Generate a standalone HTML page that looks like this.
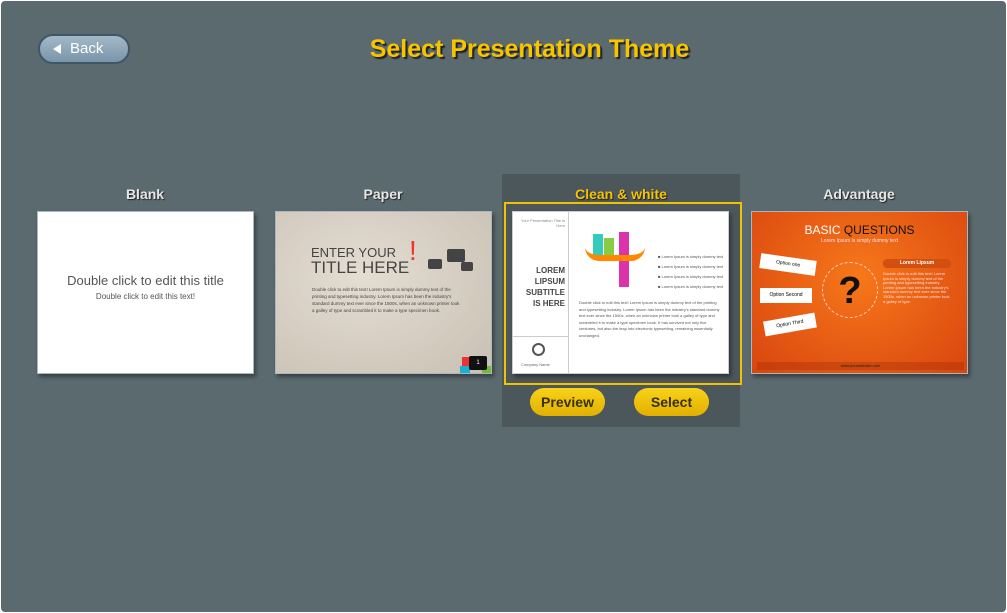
<!DOCTYPE html>
<html><head><style>
*{margin:0;padding:0;box-sizing:border-box}
body{width:1007px;height:613px;overflow:hidden;background:#fff;font-family:"Liberation Sans",sans-serif}
#app{position:absolute;left:1px;top:1px;width:1005px;height:611px;background:#5b6a6f;border-radius:4px}
.back{position:absolute;left:37px;top:33px;width:92px;height:30px;border-radius:15px;background:linear-gradient(#a3b9c8,#7a95a9);border:2px solid #3f5668;color:#fff;font-size:15px;line-height:26px;padding-left:30px}
.back:before{content:"";position:absolute;left:13px;top:8px;border-right:8px solid #fff;border-top:5px solid transparent;border-bottom:5px solid transparent}
h1{position:absolute;left:0;width:1057px;top:34px;text-align:center;font-size:25px;font-weight:bold;color:#f7c500;text-shadow:2px 2px 1px #222}
.lab{position:absolute;top:185px;width:216px;text-align:center;font-size:14px;font-weight:bold;color:#e6e6e6;text-shadow:1px 1px 1px #222}
.card{position:absolute;top:210px;width:217px;height:163px;border:1px solid #a9b7c2;box-shadow:2px 3px 4px rgba(0,0,0,.4);overflow:hidden}
.panel{position:absolute;left:501px;top:173px;width:238px;height:253px;background:#4c575b}
.sel{position:absolute;left:503px;top:201px;width:238px;height:183px;border:2px solid #f2c200}
.btn{position:absolute;top:387px;width:75px;height:28px;border-radius:14px;background:linear-gradient(#f8d21a,#e2b000);color:#3a3000;font-weight:bold;font-size:14px;text-align:center;line-height:28px}
</style></head><body><div id="app">
<div class="back">Back</div>
<h1>Select Presentation Theme</h1>
<div class="panel"></div>
<div class="lab" style="left:36px">Blank</div>
<div class="lab" style="left:274px">Paper</div>
<div class="lab" style="left:512px;color:#f5c400">Clean &amp; white</div>
<div class="lab" style="left:750px">Advantage</div>
<div class="card" style="left:36px;background:#fff;text-align:center;color:#555">
<div style="margin-top:61px;font-size:13px">Double click to edit this title</div>
<div style="font-size:8px;margin-top:4px">Double click to edit this text!</div></div>
<div class="card" style="left:274px;background:radial-gradient(ellipse at 40% 40%,#e4ddd2,#c9c0b3);">
<div style="position:absolute;left:35px;top:33px;font-size:13px;color:#444;line-height:15px">ENTER YOUR<br><span style="font-size:17px">TITLE HERE</span><span style="color:#e33;font-size:28px;position:absolute;top:-2px;left:98px">!</span></div>
<div style="position:absolute;left:152px;top:47px;width:14px;height:10px;background:#444;border-radius:2px"></div>
<div style="position:absolute;left:171px;top:37px;width:18px;height:13px;background:#444;border-radius:2px"></div>
<div style="position:absolute;left:185px;top:50px;width:12px;height:9px;background:#444;border-radius:2px"></div>
<div style="position:absolute;left:36px;top:74px;width:150px;font-size:4.5px;color:#444;line-height:7px">Double click to edit this text! Lorem Ipsum is simply dummy text of the printing and typesetting industry. Lorem Ipsum has been the industry's standard dummy text ever since the 1500s, when an unknown printer took a galley of type and scrambled it to make a type specimen book.</div>
<div style="position:absolute;left:186px;top:145px;width:10px;height:10px;background:#e33"></div>
<div style="position:absolute;left:184px;top:154px;width:10px;height:8px;background:#1ab0d0"></div>
<div style="position:absolute;left:206px;top:154px;width:10px;height:8px;background:#7b3"></div>
<div style="position:absolute;left:193px;top:144px;width:18px;height:14px;background:#111;border-radius:2px;color:#fff;font-size:6px;text-align:center;line-height:14px">1</div>
</div>
<div class="sel"></div>
<div class="card" style="left:511px;background:#fff;border-color:#ccc">
<div style="position:absolute;left:55px;top:0;width:1px;height:163px;background:#ccc"></div>
<div style="position:absolute;left:0;top:124px;width:55px;height:1px;background:#ccc"></div>
<div style="position:absolute;left:2px;top:6px;width:50px;text-align:right;font-size:4px;color:#888">Your Presentation Title is Here</div>
<div style="position:absolute;left:2px;top:53px;width:50px;text-align:right;font-size:8px;font-weight:bold;color:#444;line-height:11px">LOREM<br>LIPSUM<br>SUBTITLE<br>IS HERE</div>
<div style="position:absolute;left:19px;top:131px;width:13px;height:13px;border:2px solid #555;border-radius:50%"></div>
<div style="position:absolute;left:8px;top:150px;font-size:4px;color:#666">Company Name</div>
<div style="position:absolute;left:80px;top:22px;width:10px;height:26px;background:#3cb"></div>
<div style="position:absolute;left:91px;top:26px;width:10px;height:22px;background:#8c4"></div>
<div style="position:absolute;left:106px;top:20px;width:10px;height:55px;background:#d3a"></div>
<div style="position:absolute;left:72px;top:35px;width:60px;height:14px;border-bottom:6px solid #f80;border-radius:0 0 40px 40px"></div>
<div style="position:absolute;left:145px;top:40px;font-size:4px;color:#555;line-height:10px;white-space:nowrap">■ Lorem Ipsum is simply dummy text<br>■ Lorem Ipsum is simply dummy text<br>■ Lorem Ipsum is simply dummy text<br>■ Lorem Ipsum is simply dummy text</div>
<div style="position:absolute;left:66px;top:88px;width:145px;font-size:4px;color:#555;line-height:6.5px">Double click to edit this text! Lorem Ipsum is simply dummy text of the printing and typesetting industry. Lorem Ipsum has been the industry's standard dummy text ever since the 1500s, when an unknown printer took a galley of type and scrambled it to make a type specimen book. It has survived not only five centuries, but also the leap into electronic typesetting, remaining essentially unchanged.</div>
</div>
<div class="btn" style="left:529px">Preview</div>
<div class="btn" style="left:633px">Select</div>
<div class="card" style="left:750px;background:radial-gradient(ellipse at 50% 40%,#f7781a,#d8450f)">
<div style="position:absolute;top:11px;width:100%;text-align:center;font-size:12px;color:#fff">BASIC <span style="color:#111">QUESTIONS</span></div>
<div style="position:absolute;top:26px;width:100%;text-align:center;font-size:5px;color:#fde">Lorem Ipsum is simply dummy text</div>
<div style="position:absolute;left:70px;top:50px;width:56px;height:56px;border:1px dashed #fcc;border-radius:50%;text-align:center;font-size:38px;font-weight:bold;color:#111;line-height:56px">?</div>
<div style="position:absolute;left:8px;top:45px;width:56px;height:15px;background:#fff;font-size:5px;line-height:15px;text-align:center;transform:rotate(8deg)">Option one</div>
<div style="position:absolute;left:8px;top:76px;width:52px;height:15px;background:#fff;font-size:5px;line-height:15px;text-align:center">Option Second</div>
<div style="position:absolute;left:12px;top:105px;width:52px;height:15px;background:#fff;font-size:5px;line-height:15px;text-align:center;transform:rotate(-10deg)">Option Third</div>
<div style="position:absolute;left:131px;top:47px;width:68px;height:9px;border-radius:4px;background:#d2500f;color:#fff;font-size:5px;text-align:center;line-height:9px;font-weight:bold">Lorem Lipsum</div>
<div style="position:absolute;left:131px;top:60px;width:68px;font-size:4px;color:#fdd;line-height:4.6px">Double click to edit this text! Lorem Ipsum is simply dummy text of the printing and typesetting industry. Lorem Ipsum has been the industry's standard dummy text ever since the 1500s, when an unknown printer took a galley of type.</div>
<div style="position:absolute;left:5px;top:150px;width:207px;height:8px;background:rgba(150,40,0,.3);font-size:4px;text-align:center;line-height:8px;color:#222">www.yourwebsite.com</div>
</div>
</div></body></html>
